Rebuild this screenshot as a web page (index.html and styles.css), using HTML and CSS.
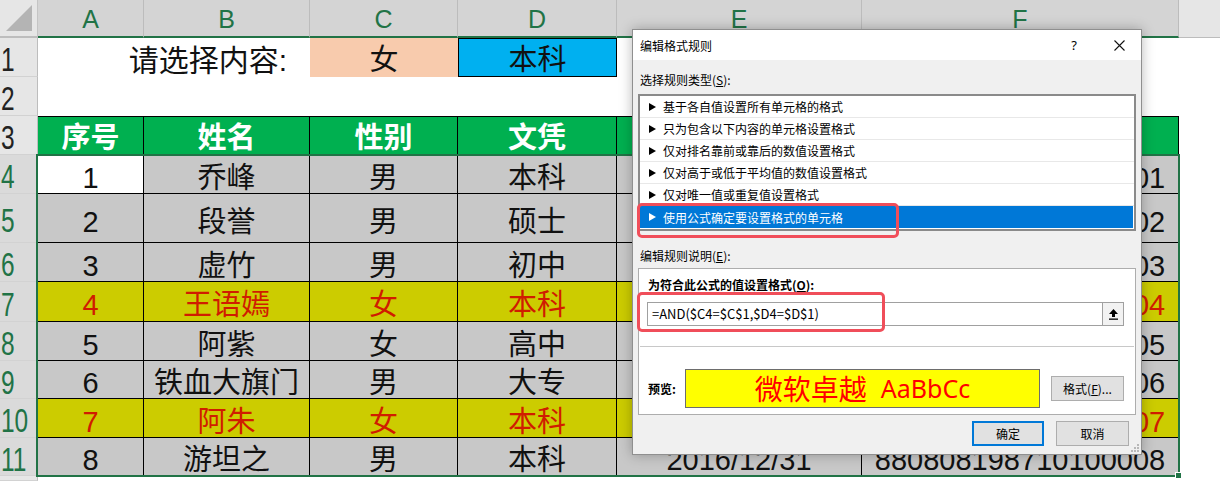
FILE: index.html
```html
<!DOCTYPE html>
<html lang="zh-CN">
<head>
<meta charset="utf-8">
<title>编辑格式规则</title>
<link rel="stylesheet" href="styles.css">
</head>
<body>
<div class="sheet">
  <div class="corner"><svg class="corner-tri" width="30" height="30" viewBox="0 0 30 30"><polygon points="2,28 28,2 28,28" fill="#b4b4b4"/></svg></div>
  <div class="ch">A</div>
  <div class="ch">B</div>
  <div class="ch">C</div>
  <div class="ch">D</div>
  <div class="ch">E</div>
  <div class="ch">F</div>
  <div class="ch off"></div>

  <div class="rh"><span>1</span></div>
  <div class="w prompt">请选择内容:</div>
  <div class="w pink">女</div>
  <div class="w blue">本科</div>
  <div class="w"></div>
  <div class="w"></div>
  <div class="w"></div>

  <div class="rh"><span>2</span></div>
  <div class="w span-all"></div>

  <div class="rh"><span>3</span></div>
  <div class="th">序号</div>
  <div class="th">姓名</div>
  <div class="th">性别</div>
  <div class="th">文凭</div>
  <div class="th">出生日期</div>
  <div class="th">身份证号</div>
  <div class="w"></div>

  <div class="rh sel"><span>4</span></div>
  <div class="c active">1</div><div class="c">乔峰</div><div class="c">男</div><div class="c">本科</div><div class="c">1985/3/15</div><div class="c">880808198710100001</div><div class="w"></div>

  <div class="rh sel"><span>5</span></div>
  <div class="c">2</div><div class="c">段誉</div><div class="c">男</div><div class="c">硕士</div><div class="c">1990/6/8</div><div class="c">880808198710100002</div><div class="w"></div>

  <div class="rh sel"><span>6</span></div>
  <div class="c">3</div><div class="c">虚竹</div><div class="c">男</div><div class="c">初中</div><div class="c">1988/2/20</div><div class="c">880808198710100003</div><div class="w"></div>

  <div class="rh sel"><span>7</span></div>
  <div class="c hl">4</div><div class="c hl">王语嫣</div><div class="c hl">女</div><div class="c hl">本科</div><div class="c hl">1992/9/1</div><div class="c hl">880808198710100004</div><div class="w"></div>

  <div class="rh sel"><span>8</span></div>
  <div class="c">5</div><div class="c">阿紫</div><div class="c">女</div><div class="c">高中</div><div class="c">1995/4/12</div><div class="c">880808198710100005</div><div class="w"></div>

  <div class="rh sel"><span>9</span></div>
  <div class="c">6</div><div class="c">铁血大旗门</div><div class="c">男</div><div class="c">大专</div><div class="c">1980/11/3</div><div class="c">880808198710100006</div><div class="w"></div>

  <div class="rh sel"><span>10</span></div>
  <div class="c hl">7</div><div class="c hl">阿朱</div><div class="c hl">女</div><div class="c hl">本科</div><div class="c hl">1991/7/7</div><div class="c hl">880808198710100007</div><div class="w"></div>

  <div class="rh sel"><span>11</span></div>
  <div class="c">8</div><div class="c">游坦之</div><div class="c">男</div><div class="c">本科</div><div class="c">2016/12/31</div><div class="c">880808198710100008</div><div class="w"></div>

  <div class="rh"></div>
  <div class="w span-all"></div>
</div>

<div class="selection"></div>
<div class="fill-handle"></div>

<div class="dialog">
  <div class="titlebar">
    <span class="title">编辑格式规则</span>
    <span class="tb-btn help">?</span>
    <span class="tb-btn close"><svg width="11" height="11" viewBox="0 0 11 11"><path d="M0.5 0.5L10.5 10.5M10.5 0.5L0.5 10.5" stroke="#111" stroke-width="1.1" fill="none"/></svg></span>
  </div>
  <div class="dbody">
    <div class="lbl1">选择规则类型(<u>S</u>):</div>
    <div class="list">
      <div class="item"><svg class="tri" width="7" height="8" viewBox="0 0 7 8"><polygon points="0,0 7,4 0,8"/></svg>基于各自值设置所有单元格的格式</div>
      <div class="item"><svg class="tri" width="7" height="8" viewBox="0 0 7 8"><polygon points="0,0 7,4 0,8"/></svg>只为包含以下内容的单元格设置格式</div>
      <div class="item"><svg class="tri" width="7" height="8" viewBox="0 0 7 8"><polygon points="0,0 7,4 0,8"/></svg>仅对排名靠前或靠后的数值设置格式</div>
      <div class="item"><svg class="tri" width="7" height="8" viewBox="0 0 7 8"><polygon points="0,0 7,4 0,8"/></svg>仅对高于或低于平均值的数值设置格式</div>
      <div class="item"><svg class="tri" width="7" height="8" viewBox="0 0 7 8"><polygon points="0,0 7,4 0,8"/></svg>仅对唯一值或重复值设置格式</div>
      <div class="item selected"><svg class="tri" width="7" height="8" viewBox="0 0 7 8"><polygon points="0,0 7,4 0,8"/></svg>使用公式确定要设置格式的单元格</div>
    </div>
    <div class="lbl2">编辑规则说明(<u>E</u>):</div>
    <div class="desc">
      <div class="desc-lbl">为符合此公式的值设置格式(<u>O</u>):</div>
      <div class="formula">
        <span class="ftext">=AND($C4=$C$1,$D4=$D$1)</span>
        <span class="fbtn"><svg width="11" height="12" viewBox="0 0 11 12"><polygon points="5.5,1 10,6 7,6 7,9 4,9 4,6 1,6" fill="#000"/><rect x="1" y="10.5" width="9" height="1.3" fill="#000"/></svg></span>
      </div>
      <div class="sep"></div>
      <div class="prev-row">
        <span class="prev-lbl">预览:</span>
        <div class="preview">微软卓越<span class="lat">AaBbCc</span></div>
        <button class="btn fmt"><span class="btn-label">格式(<u>F</u>)...</span></button>
      </div>
    </div>
    <div class="actions">
      <button class="btn ok">确定</button>
      <button class="btn cancel">取消</button>
    </div>
  </div>
  <div class="hlbox hl1"></div>
  <div class="hlbox hl2"></div>
  <svg class="grip" width="8" height="8" viewBox="0 0 8 8"><g fill="#b8b8b8"><rect x="6" y="0" width="2" height="2"/><rect x="3" y="3" width="2" height="2"/><rect x="6" y="3" width="2" height="2"/><rect x="0" y="6" width="2" height="2"/><rect x="3" y="6" width="2" height="2"/><rect x="6" y="6" width="2" height="2"/></g></svg>
</div>
</body>
</html>
```

FILE: styles.css
```css
html, body {
  margin: 0;
  padding: 0;
  background: #fff;
  overflow: hidden;
}

.sheet {
  display: grid;
  grid-template-columns: 38px 106px 166px 148px 159px 245px 317px 41px;
  grid-template-rows: 38px 39px 39px 39px 39px 49px 39px 40px 39px 38px 39px 38px 5px;
  width: 1220px;
  height: 481px;
  font-family: "Liberation Sans", "Noto Sans CJK SC", sans-serif;
  font-size: 29px;
  line-height: 1.1;
  color: #111;
}

.sheet > div {
  box-sizing: border-box;
  min-width: 0;
  overflow: hidden;
  white-space: nowrap;
}

.corner {
  background: #e6e6e6;
  border-right: 1px solid #c4c4c4;
  border-bottom: 2px solid #bdbdbd;
  display: flex;
  align-items: flex-end;
  justify-content: flex-end;
  padding: 0 3px 3px 0;
}

.ch {
  background: #d4d4d4;
  color: #217346;
  font-size: 25px;
  border-right: 1px solid #bcbcbc;
  border-bottom: 2px solid #217346;
  display: flex;
  align-items: center;
  justify-content: center;
  padding-top: 4px;
}

.ch.off {
  background: #e6e6e6;
  border-bottom: 1px solid #bcbcbc;
  border-right: none;
}

.rh {
  background: #e6e6e6;
  color: #222;
  font-size: 34px;
  line-height: 30px;
  border-right: 1px solid #bdbdbd;
  border-bottom: 1px solid #d2d2d2;
  display: flex;
  align-items: center;
  padding: 4px 0 0 1px;
}

.rh span {
  display: inline-block;
  transform: scaleX(0.72);
  transform-origin: left center;
}

.rh.sel {
  background: #dadada;
  color: #217346;
  border-right: 2px solid #217346;
}

.w {
  background: #fff;
}

.span-all {
  grid-column: 2 / -1;
}

.prompt {
  grid-column: 2 / 4;
  display: flex;
  align-items: center;
  justify-content: flex-end;
  padding: 6px 23px 0 0;
  font-size: 30px;
}

.pink,
.blue {
  display: flex;
  align-items: center;
  justify-content: center;
  padding-top: 6px;
}

.pink {
  background: #f8cbad;
}

.blue {
  background: #00b0f0;
  border: 1px solid #000;
}

.th {
  background: #00b050;
  color: #fff;
  font-weight: bold;
  border-top: 1px solid #000;
  border-right: 1px solid #000;
  display: flex;
  align-items: center;
  justify-content: center;
  padding-top: 6px;
}

.c {
  background: #c8c8c8;
  border-right: 1px solid #000;
  border-bottom: 1px solid #000;
  display: flex;
  align-items: center;
  justify-content: center;
  padding-top: 9px;
}

.c.active {
  background: #fff;
}

.c.hl {
  background: #cccc00;
  color: #d01c00;
}

.selection {
  position: absolute;
  left: 36px;
  top: 154px;
  width: 1144px;
  height: 323px;
  box-sizing: border-box;
  border: 2px solid #217346;
  pointer-events: none;
}

.fill-handle {
  position: absolute;
  left: 1175px;
  top: 472px;
  width: 7px;
  height: 7px;
  box-sizing: border-box;
  background: #217346;
  border: 1px solid #fff;
}

/* dialog */
.dialog {
  position: absolute;
  left: 632px;
  top: 29px;
  width: 510px;
  height: 426px;
  box-sizing: border-box;
  border: 1px solid #8f8f8f;
  background: #f0f0f0;
  box-shadow: 0 0 12px rgba(0, 0, 0, 0.28);
  font-family: "Noto Sans CJK SC", sans-serif;
  font-size: 12px;
  color: #000;
  display: flex;
  flex-direction: column;
  z-index: 5;
}

.titlebar {
  flex: none;
  height: 30px;
  background: #fff;
  display: flex;
  align-items: center;
  padding-left: 7px;
}

.title {
  flex: 1;
}

.tb-btn {
  height: 30px;
  width: 46px;
  display: flex;
  align-items: center;
  justify-content: center;
}

.help {
  font-family: "Noto Sans", sans-serif;
  font-size: 13px;
}

.close {
  width: 44px;
}

.dbody {
  flex: 1;
  padding: 0 5px;
  display: flex;
  flex-direction: column;
}

.lbl1 {
  height: 34px;
  box-sizing: border-box;
  padding: 11px 0 0 2px;
  line-height: 18px;
}

.list {
  height: 137px;
  box-sizing: border-box;
  border: 2px solid #8a8a8a;
  background: #fff;
}

.item {
  height: 22px;
  box-sizing: border-box;
  border-bottom: 1px solid #e8e8e8;
  display: flex;
  align-items: center;
  gap: 7px;
  padding-left: 9px;
}

.tri {
  fill: #000;
  flex: none;
}

.item.selected {
  background: #0078d7;
  color: #fff;
  border-bottom: none;
  margin-right: 1px;
}

.item.selected .tri {
  fill: #fff;
}

.lbl2 {
  height: 37px;
  box-sizing: border-box;
  padding: 16px 0 0 2px;
  line-height: 18px;
}

.desc {
  height: 147px;
  box-sizing: border-box;
  border: 1px solid #adadad;
  background: #fff;
  padding: 0 11px 0 8px;
  display: flex;
  flex-direction: column;
}

.desc-lbl {
  font-weight: bold;
  padding: 8px 0 0 1px;
  line-height: 16px;
}

.formula {
  margin-top: 9px;
  height: 24px;
  box-sizing: border-box;
  border: 1px solid #a0a0a0;
  display: flex;
  background: #fff;
}

.ftext {
  flex: 1;
  padding-left: 4px;
  line-height: 22px;
  font-family: "Noto Sans CJK SC", sans-serif;
  font-size: 13px;
}

.fbtn {
  width: 20px;
  border-left: 1px solid #a0a0a0;
  background: #f2f2f2;
  display: flex;
  align-items: center;
  justify-content: center;
}

.sep {
  margin: 20px -10px 0 -7px;
  height: 1px;
  background: #c8c8c8;
}

.prev-row {
  margin-top: 22px;
  display: flex;
  align-items: center;
}

.prev-lbl {
  width: 37px;
  padding-left: 1px;
  font-weight: bold;
}

.preview {
  width: 355px;
  height: 39px;
  box-sizing: border-box;
  border: 1px solid #6d6d6d;
  background: #ffff00;
  color: #ff0000;
  font-size: 28px;
  line-height: 1.1;
  display: flex;
  align-items: center;
  justify-content: center;
}

.lat {
  font-family: "Noto Sans", sans-serif;
  font-size: 25px;
  margin-left: 14px;
}

.btn {
  height: 25px;
  box-sizing: border-box;
  border: 1px solid #adadad;
  background: #e1e1e1;
  font-family: "Noto Sans CJK SC", sans-serif;
  font-size: 12px;
  color: #000;
  padding: 0;
}

.btn-label {
  white-space: nowrap;
}

.fmt {
  margin-left: 11px;
  width: 73px;
}

.actions {
  margin-top: 6px;
  display: flex;
  justify-content: flex-end;
  gap: 12px;
  padding-right: 7px;
}

.ok {
  width: 72px;
  border: 2px solid #0078d7;
}

.cancel {
  width: 73px;
}

.hlbox {
  position: absolute;
  box-sizing: border-box;
  border: 3px solid #f04e5a;
  border-radius: 5px;
  pointer-events: none;
}

.hl1 {
  left: 4px;
  top: 173px;
  width: 262px;
  height: 35px;
}

.hl2 {
  left: 4px;
  top: 262px;
  width: 248px;
  height: 40px;
}

.grip {
  position: absolute;
  right: 2px;
  bottom: 2px;
}
```
